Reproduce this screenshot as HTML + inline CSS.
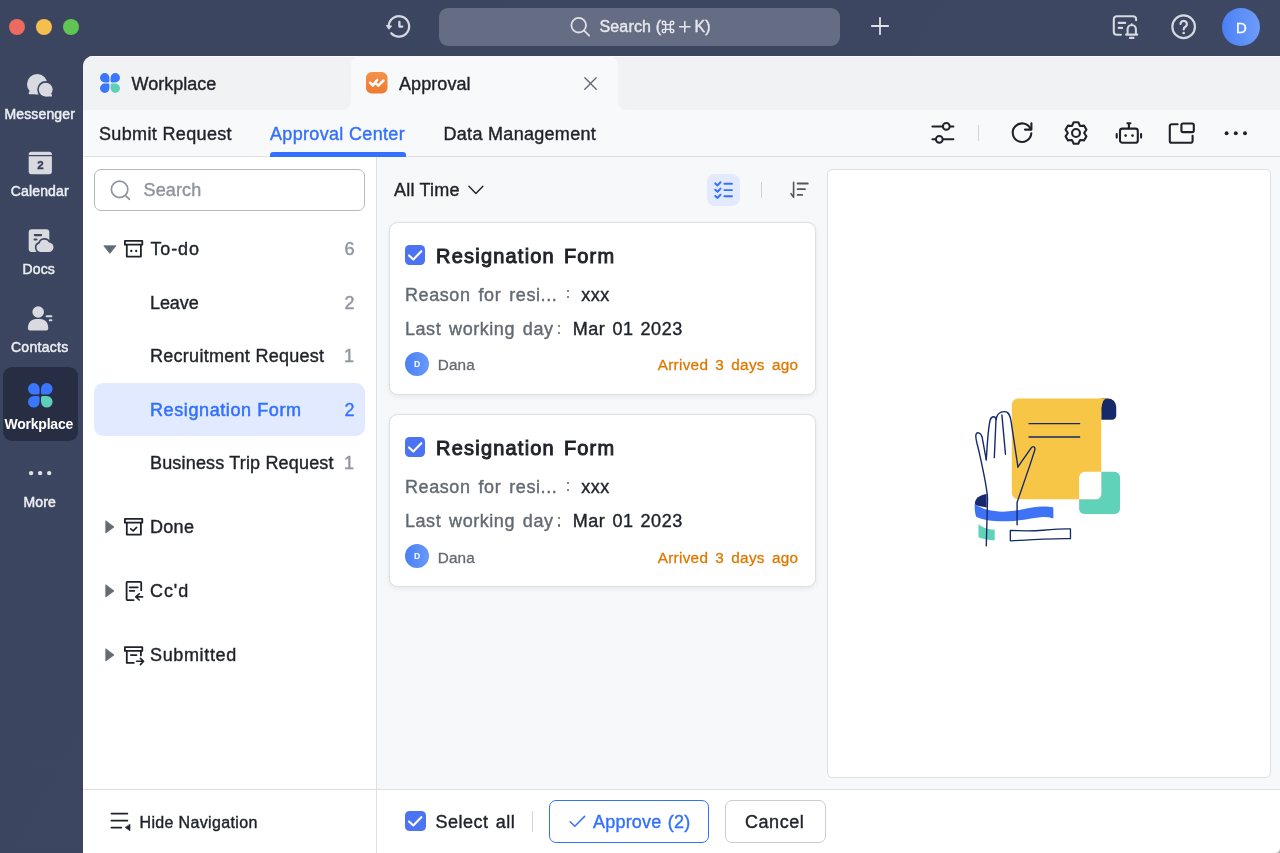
<!DOCTYPE html>
<html>
<head>
<meta charset="utf-8">
<title>Approval</title>
<style>
*{box-sizing:border-box;margin:0;padding:0}
html,body{width:1280px;height:853px;overflow:hidden}
body{font-family:"Liberation Sans",sans-serif;background:#3c4661;position:relative;color:#1f2329;-webkit-font-smoothing:antialiased}
.abs{position:absolute}
.t{position:absolute;white-space:pre;line-height:1}
.t,.nav,.row,.cnt{-webkit-text-stroke-width:0.4px}
svg{position:absolute;overflow:visible}
/* window chrome */
#bg{position:absolute;left:0;top:0;width:1280px;height:853px;background:linear-gradient(120deg,#3b4560 0%,#3c4661 50%,#3f4964 100%)}
.tl{position:absolute;top:18.5px;width:16px;height:16px;border-radius:50%}
#searchbar{position:absolute;left:439px;top:8px;width:401px;height:37.5px;border-radius:9px;background:#646d83}
.sb-label{position:absolute;left:0;width:79.5px;text-align:center;font-size:14px;line-height:14px;color:#eceef1;font-weight:normal;-webkit-text-stroke:0.5px #eceef1;white-space:pre;letter-spacing:0.15px}
#wp-sel{position:absolute;left:2.5px;top:366.5px;width:75px;height:74.5px;border-radius:9px;background:#272d42}
/* main */
#main{will-change:transform;position:absolute;left:83px;top:56px;width:1197px;height:797px;background:#f7f8fa;border-radius:10px 0 0 0;overflow:hidden}
#tabbar{position:absolute;left:0;top:0;width:1197px;height:53.5px;background:#f1f2f4;box-shadow:inset 0 1px 0 rgba(255,255,255,0.75)}
#tab-active{position:absolute;left:267.5px;top:0;width:267.5px;height:53.5px;background:#f8f9fa;border-radius:9px 9px 0 0}
#tab-active:before,#tab-active:after{content:"";position:absolute;bottom:0;width:9px;height:9px}
#tab-active:before{left:-9px;background:radial-gradient(circle at 0 0,rgba(248,249,250,0) 8.5px,#f8f9fa 9.5px)}
#tab-active:after{right:-9px;background:radial-gradient(circle at 100% 0,rgba(248,249,250,0) 8.5px,#f8f9fa 9.5px)}
#navrow{position:absolute;left:0;top:53.5px;width:1197px;height:47px;background:#f8f9fa;border-bottom:1px solid #dee0e3}
.nav{position:absolute;top:68.5px;font-size:18px;line-height:18px;white-space:pre;color:#1f2329}
#leftpanel{position:absolute;left:0;top:100.5px;width:293.5px;height:697px;background:#fff;border-right:1px solid #dee0e3}
#bottombar{position:absolute;left:293.5px;top:733px;width:904px;height:64px;background:#fff;border-top:1px solid #dee0e3}
#leftbottom{position:absolute;left:0;top:733px;width:293px;height:64px;border-top:1px solid #dee0e3;background:#fff}
#lsearch{position:absolute;left:11px;top:113px;width:271px;height:42px;border:1px solid #b4b8bf;border-radius:7px;background:#fff}
.row{position:absolute;font-size:18px;line-height:18px;white-space:pre;color:#1f2329}
.cnt{position:absolute;font-size:18px;line-height:18px;color:#8f959e;width:20px;text-align:right}
#rowsel{position:absolute;left:11px;top:326.5px;width:271px;height:53px;border-radius:9px;background:#e1eaff}
.card{position:absolute;left:305.5px;width:427.2px;height:173.2px;background:#fff;border:1px solid #dcdee2;border-radius:8.5px;box-shadow:0 2px 5px rgba(31,35,41,0.07)}
.card .t{font-size:18px}
.cb{position:absolute;width:20.2px;height:20.2px;border-radius:4.6px;background:#4c73f1}
.av{position:absolute;width:24px;height:24px;border-radius:50%;background:linear-gradient(90deg,#4a80f5,#6a99f8);color:#fff;font-size:8.6px;font-weight:bold;text-align:center;line-height:24.4px}
#rightpanel{position:absolute;left:744px;top:113px;width:443.5px;height:609px;background:#fff;border:1px solid #dee0e3;border-radius:5px}
.btn{position:absolute;top:744px;height:42.6px;border-radius:7px;background:#fff;font-size:18px}
</style>
</head>
<body>
<div id="bg"></div>

<div id="chrome" style="position:absolute;left:0;top:0;width:1280px;height:853px;will-change:transform">
<!-- traffic lights -->
<div class="tl" style="left:9.3px;background:#ec6a5f"></div>
<div class="tl" style="left:36.1px;background:#f5bf4f"></div>
<div class="tl" style="left:62.8px;background:#61c554"></div>

<!-- TOPBAR -->
<!-- history icon -->
<svg style="left:386px;top:14px" width="26" height="26" viewBox="0 0 26 26" fill="none" stroke="#d6d9df" stroke-width="2.2" stroke-linecap="round" stroke-linejoin="round">
  <path d="M2.74 12.3 A10.2 10.2 0 1 1 5.3 19.2"/>
  <path d="M0.7 11.6 L5.4 12.1 L2.9 14.8 Z" fill="#d6d9df" stroke-width="1.2"/>
  <path d="M13.4 7.9 V12.6 H16.3" stroke-width="2.3"/>
</svg>
<div id="searchbar"></div>
<svg style="left:568px;top:15px" width="24" height="24" viewBox="0 0 24 24" fill="none" stroke="#dfe1e6" stroke-width="1.8" stroke-linecap="round">
  <circle cx="10.7" cy="10.2" r="7.3"/><path d="M16.1 15.6 L21.2 20.6"/>
</svg>
<div class="t" style="left:599.5px;top:18.8px;font-size:16px;color:#e6e8ec;letter-spacing:0.15px">Search (</div>
<svg style="left:661.2px;top:19.8px" width="14" height="14" viewBox="0 0 13 13" fill="none" stroke="#e6e8ec" stroke-width="1.35">
  <path d="M4.3 4.3 H8.7 V8.7 H4.3 Z M4.3 4.3 V2.7 A1.6 1.6 0 1 0 2.7 4.3 Z M8.7 4.3 H10.3 A1.6 1.6 0 1 0 8.7 2.7 Z M8.7 8.7 V10.3 A1.6 1.6 0 1 0 10.3 8.7 Z M4.3 8.7 H2.7 A1.6 1.6 0 1 0 4.3 10.3 Z"/>
</svg>
<svg style="left:678.6px;top:21px" width="12" height="12" viewBox="0 0 12 12" fill="none" stroke="#e6e8ec" stroke-width="1.5" stroke-linecap="round"><path d="M5.8 0.6 V11 M0.6 5.8 H11"/></svg>
<div class="t" style="left:694.4px;top:18.8px;font-size:16px;color:#e6e8ec;letter-spacing:0.3px">K)</div>
<!-- plus -->
<svg style="left:871px;top:17px" width="18" height="18" viewBox="0 0 18 18" fill="none" stroke="#dfe1e6" stroke-width="1.8" stroke-linecap="round"><path d="M9 0.8 V17.2 M0.8 9 H17.2"/></svg>
<!-- notification -->
<svg style="left:1112px;top:14px" width="28" height="28" viewBox="0 0 28 28" fill="none" stroke="#d6d9df" stroke-width="2.1" stroke-linecap="round" stroke-linejoin="round">
  <path d="M8.9 20.7 H4.8 A3 3 0 0 1 1.8 17.7 V5.2 A3 3 0 0 1 4.8 2.2 H21.1 A3 3 0 0 1 24.1 5.2 V6.2"/>
  <path d="M6.7 8.9 H13.2 M6.7 13.9 H10.1"/>
  <path d="M14.1 20.6 H25.3 M15.6 20.4 V15.2 A4.15 4.15 0 0 1 23.9 15.2 V20.4 M19.75 10.8 V10.3"/>
  <path d="M18 23.9 H21.5"/>
</svg>
<!-- help -->
<svg style="left:1171px;top:14px" width="26" height="26" viewBox="0 0 26 26" fill="none" stroke="#d6d9df" stroke-width="2.2" stroke-linecap="round" stroke-linejoin="round">
  <circle cx="12.65" cy="12.75" r="11.3"/>
  <path d="M9.5 10 A3.2 3.2 0 1 1 14.4 12.8 C13.1 13.6 12.7 14.2 12.7 15.4"/>
  <circle cx="12.7" cy="19" r="1.3" fill="#d6d9df" stroke="none"/>
</svg>
<!-- avatar -->
<div class="abs" style="left:1222px;top:7.5px;width:38px;height:38px;border-radius:50%;background:linear-gradient(90deg,#4a80f5 0%,#5c8ff7 50%,#6d9bf8 100%)"></div>
<div class="t" style="left:1222.3px;top:19.6px;width:38px;text-align:center;font-size:15px;color:#fff;-webkit-text-stroke-width:0.3px">D</div>

<!-- SIDEBAR -->
<div id="wp-sel"></div>
<!-- messenger -->
<svg style="left:26px;top:73px" width="28" height="24" viewBox="0 0 28 24">
  <g fill="#d8dae0">
    <circle cx="11.2" cy="11.3" r="10.2"/>
    <path d="M2.8 21.35 V19.6 L3.7 18 H11 V21.35 Z"/>
  </g>
  <circle cx="19.7" cy="16.6" r="8.5" fill="#3c4661"/>
  <g fill="#d8dae0">
    <circle cx="19.7" cy="16.6" r="6.9"/>
    <path d="M19.7 23.5 H25.9 V21.8 L25.1 20.4 H19.7 Z"/>
  </g>
</svg>
<div class="sb-label" style="top:107px">Messenger</div>
<!-- calendar -->
<svg style="left:28px;top:151px" width="25" height="24" viewBox="0 0 25 24">
  <path d="M0.7 4 V3.6 A2.8 2.8 0 0 1 3.5 0.8 H21.1 A2.8 2.8 0 0 1 23.9 3.6 V4 Z" fill="#d8dae0"/>
  <path d="M0.7 5.3 H23.9 V20.5 A2.8 2.8 0 0 1 21.1 23.3 H3.5 A2.8 2.8 0 0 1 0.7 20.5 Z" fill="#d8dae0"/>
</svg>
<div class="t" style="left:28px;top:159.5px;width:25px;text-align:center;font-size:11.5px;font-weight:bold;color:#39425c">2</div>
<div class="sb-label" style="top:184.3px">Calendar</div>
<!-- docs -->
<svg style="left:28px;top:228px" width="27" height="25" viewBox="0 0 27 25">
  <rect x="0.7" y="1.3" width="20.6" height="22.7" rx="3" fill="#d8dae0"/>
  <path d="M6.8 7.1 H13.1 M6.6 11.5 H8.5" stroke="#3c4661" stroke-width="2.1" stroke-linecap="round"/>
  <path d="M12.6 24 A4.4 4.4 0 0 1 11.6 15.4 A5 5 0 0 1 21 14.6 A4.4 4.4 0 0 1 20.6 24 Z" fill="#d8dae0" stroke="#3c4661" stroke-width="3.2" paint-order="stroke"/>
</svg>
<div class="sb-label" style="top:261.7px;left:-1px">Docs</div>
<!-- contacts -->
<svg style="left:27px;top:305px" width="27" height="27" viewBox="0 0 27 27">
  <circle cx="11.2" cy="7" r="5.8" fill="#d8dae0"/>
  <path d="M0.9 23.2 C0.9 17.4 4.2 13.9 9.2 13.9 H13.2 C18.2 13.9 21.3 17.4 21.3 23.2 A2.2 2.2 0 0 1 19.1 25.4 H3.1 A2.2 2.2 0 0 1 0.9 23.2 Z" fill="#d8dae0"/>
  <path d="M19.7 11.2 H24.3 M22.8 15.3 H24.4" stroke="#d8dae0" stroke-width="2.1" stroke-linecap="round"/>
</svg>
<div class="sb-label" style="top:339.6px;letter-spacing:0.3px">Contacts</div>
<!-- workplace -->
<svg style="left:27.8px;top:383.2px" width="24.6" height="24.6" viewBox="0 0 24.6 24.6"><path d="M5.8 0 H5.8 A5.8 5.8 0 0 1 11.6 5.8 V9.9 A1.7 1.7 0 0 1 9.9 11.6 H5.8 A5.8 5.8 0 0 1 0 5.8 V5.8 A5.8 5.8 0 0 1 5.8 0 Z" fill="#3b77fd"/><path d="M18.8 0 H18.8 A5.8 5.8 0 0 1 24.6 5.8 V5.8 A5.8 5.8 0 0 1 18.8 11.6 H14.7 A1.7 1.7 0 0 1 13 9.9 V5.8 A5.8 5.8 0 0 1 18.8 0 Z" fill="#3b77fd"/><path d="M5.8 13 H9.9 A1.7 1.7 0 0 1 11.6 14.7 V18.8 A5.8 5.8 0 0 1 5.8 24.6 H5.8 A5.8 5.8 0 0 1 0 18.8 V18.8 A5.8 5.8 0 0 1 5.8 13 Z" fill="#3b77fd"/><path d="M14.7 13 H18.8 A5.8 5.8 0 0 1 24.6 18.8 V18.8 A5.8 5.8 0 0 1 18.8 24.6 H18.8 A5.8 5.8 0 0 1 13 18.8 V14.7 A1.7 1.7 0 0 1 14.7 13 Z" fill="#5ed0b8"/>
</svg>
<div class="sb-label" style="top:416.8px;left:-1px;color:#fff;font-weight:bold;-webkit-text-stroke:0;letter-spacing:-0.2px">Workplace</div>
<!-- more -->
<svg style="left:28px;top:469px" width="24" height="8" viewBox="0 0 24 8" fill="#e0e2e7">
  <circle cx="3.1" cy="4.1" r="2.2"/><circle cx="12.1" cy="4.1" r="2.2"/><circle cx="21.2" cy="4.1" r="2.2"/>
</svg>
<div class="sb-label" style="top:494.6px">More</div>

</div>
<!-- MAIN -->
<div id="main">
  <div id="tabbar"></div>
  <div id="tab-active"></div>
  <div id="navrow"></div>
  <div id="leftpanel"></div>
  <div id="leftbottom"></div>
  <div id="bottombar"></div>
  <div id="rightpanel"></div>
  <div class="abs" style="right:0;bottom:0;width:4px;height:4px;background:radial-gradient(circle at 0 0,rgba(160,160,160,0) 3px,#a8a8a8 4.5px);z-index:5"></div>
  <!-- tabs (coords relative to #main: x-83, y-56) -->
  <svg style="left:17px;top:17.2px" width="20" height="20" viewBox="0 0 24.6 24.6"><path d="M5.8 0 H5.8 A5.8 5.8 0 0 1 11.6 5.8 V9.9 A1.7 1.7 0 0 1 9.9 11.6 H5.8 A5.8 5.8 0 0 1 0 5.8 V5.8 A5.8 5.8 0 0 1 5.8 0 Z" fill="#3b77fd"/><path d="M18.8 0 H18.8 A5.8 5.8 0 0 1 24.6 5.8 V5.8 A5.8 5.8 0 0 1 18.8 11.6 H14.7 A1.7 1.7 0 0 1 13 9.9 V5.8 A5.8 5.8 0 0 1 18.8 0 Z" fill="#3b77fd"/><path d="M5.8 13 H9.9 A1.7 1.7 0 0 1 11.6 14.7 V18.8 A5.8 5.8 0 0 1 5.8 24.6 H5.8 A5.8 5.8 0 0 1 0 18.8 V18.8 A5.8 5.8 0 0 1 5.8 13 Z" fill="#3b77fd"/><path d="M14.7 13 H18.8 A5.8 5.8 0 0 1 24.6 18.8 V18.8 A5.8 5.8 0 0 1 18.8 24.6 H18.8 A5.8 5.8 0 0 1 13 18.8 V14.7 A1.7 1.7 0 0 1 14.7 13 Z" fill="#5ed0b8"/>
</svg>
  <div class="t" style="left:48.5px;top:18.5px;font-size:18px">Workplace</div>
  <svg style="left:283px;top:16px" width="21.5" height="21.5" viewBox="0 0 21.5 21.5">
    <defs><linearGradient id="og" x1="0" y1="0" x2="0" y2="1"><stop offset="0" stop-color="#f6914a"/><stop offset="1" stop-color="#ee7a30"/></linearGradient></defs>
    <rect x="0" y="0" width="21.5" height="21.5" rx="5.6" fill="url(#og)"/>
    <path d="M4.1 10.7 L6.9 13.5 L11.1 8.1 M10.4 11.9 L12.3 13.6 L17.5 8.5" fill="none" stroke="#fff" stroke-width="2.5" stroke-linecap="round" stroke-linejoin="round"/>
  </svg>
  <div class="t" style="left:316px;top:18.5px;font-size:18px;letter-spacing:0.08px">Approval</div>
  <svg style="left:500.5px;top:20.5px" width="13" height="13" viewBox="0 0 13 13" fill="none" stroke="#646a73" stroke-width="1.3" stroke-linecap="round"><path d="M0.8 0.8 L12.2 12.2 M12.2 0.8 L0.8 12.2"/></svg>

  <!-- nav row -->
  <div class="nav" style="left:16px;letter-spacing:0.35px">Submit Request</div>
  <div class="nav" style="left:187px;letter-spacing:0.33px;color:#3370ff">Approval Center</div>
  <div class="abs" style="left:187px;top:96px;width:135.5px;height:4.5px;background:#3370ff;border-radius:3px 3px 0 0"></div>
  <div class="nav" style="left:360.5px;letter-spacing:0.3px">Data Management</div>
  <!-- nav icons -->
  <svg style="left:847px;top:65px" width="26" height="26" viewBox="0 0 26 26" fill="none" stroke="#1f2329" stroke-width="2" stroke-linecap="round">
    <path d="M2.4 5.4 H12.6 M20 5.4 H23.4 M2.4 18.3 H5.6 M13 18.3 H23.4"/>
    <circle cx="16.3" cy="5.4" r="3.4"/><circle cx="9.3" cy="18.3" r="3.4"/>
  </svg>
  <div class="abs" style="left:895px;top:69px;width:1px;height:16px;background:#d0d3d8"></div>
  <svg style="left:927px;top:65px" width="24" height="24" viewBox="0 0 24 24" fill="none" stroke="#1f2329" stroke-width="2.1" stroke-linecap="round" stroke-linejoin="round">
    <path d="M20.4 7.6 A9.3 9.3 0 1 0 21.3 12.4"/>
    <path d="M21.4 2.2 V8.6 H15"/>
  </svg>
  <svg style="left:979.9px;top:63.8px" width="26" height="26" viewBox="0 0 26 26" fill="none" stroke="#1f2329" stroke-width="2.1" stroke-linecap="round" stroke-linejoin="round">
    <circle cx="13" cy="13" r="3.95"/>
    <path d="M15.28 2.29 L10.72 2.29 L8.93 5.94 L4.86 5.67 L2.59 9.62 L4.85 13.00 L2.59 16.38 L4.86 20.33 L8.92 20.06 L10.72 23.71 L15.28 23.71 L17.08 20.06 L21.14 20.33 L23.41 16.38 L21.15 13.00 L23.41 9.62 L21.14 5.67 L17.07 5.94 Z"/>
  </svg>
  <svg style="left:1032px;top:63.5px" width="28" height="26" viewBox="0 0 28 26" fill="none" stroke="#1f2329" stroke-width="2.1" stroke-linecap="round" stroke-linejoin="round">
    <rect x="5" y="8.6" width="17.8" height="14.2" rx="2.4"/>
    <path d="M13.9 8.2 V3.6 M12.4 3.2 H15.4"/>
    <path d="M1.7 14 V17.6 M26.1 14 V17.6"/>
    <circle cx="10.6" cy="15.6" r="1.3" fill="#1f2329" stroke="none"/><circle cx="17.5" cy="15.6" r="1.3" fill="#1f2329" stroke="none"/>
  </svg>
  <svg style="left:1085px;top:66px" width="28" height="24" viewBox="0 0 28 24" fill="none" stroke="#1f2329" stroke-width="2.1" stroke-linecap="round" stroke-linejoin="round">
    <path d="M9.6 2.2 H3.6 A1.8 1.8 0 0 0 1.8 4 V19 A1.8 1.8 0 0 0 3.6 20.8 H22.8 A1.8 1.8 0 0 0 24.6 19 V13.8"/>
    <rect x="13.4" y="1.5" width="12.4" height="8.6" rx="1.6"/>
  </svg>
  <svg style="left:1141px;top:74px" width="24" height="6" viewBox="0 0 24 6" fill="#1f2329"><circle cx="2.6" cy="3.3" r="1.95"/><circle cx="11.8" cy="3.3" r="1.95"/><circle cx="21" cy="3.3" r="1.95"/></svg>

  <!-- left panel -->
  <div id="lsearch"></div>
  <svg style="left:26px;top:123px" width="22" height="22" viewBox="0 0 22 22" fill="none" stroke="#8f959e" stroke-width="1.7" stroke-linecap="round"><circle cx="10.6" cy="10.4" r="8.2"/><path d="M16.6 16.6 L20.4 20.4"/></svg>
  <div class="row" style="left:60.5px;top:124.5px;color:#8f959e;letter-spacing:0.15px">Search</div>

  <svg style="left:20px;top:189px" width="14" height="10" viewBox="0 0 14 10"><path d="M0.8 0.8 H13 L6.9 8.4 Z" fill="#646a73" stroke="#646a73" stroke-width="0.8" stroke-linejoin="round"/></svg>
  <svg style="left:41px;top:183px" width="20" height="20" viewBox="0 0 20 20" fill="none" stroke="#1f2329" stroke-width="1.8" stroke-linejoin="round" stroke-linecap="round">
    <path d="M0.9 1.9 H18.3 V5.7 H0.9 Z"/><path d="M2.8 6 V17.6 H16.9 V6"/>
    <circle cx="7.3" cy="12" r="1.15" fill="#1f2329" stroke="none"/><circle cx="12.2" cy="12" r="1.15" fill="#1f2329" stroke="none"/>
  </svg>
  <div class="row" style="left:67.5px;top:184px;letter-spacing:0.85px">To-do</div>
  <div class="cnt" style="left:251.5px;top:184px">6</div>

  <div class="row" style="left:67px;top:237.5px;letter-spacing:-0.1px">Leave</div>
  <div class="cnt" style="left:251.5px;top:237.5px">2</div>
  <div class="row" style="left:67px;top:291px;letter-spacing:0.28px">Recruitment Request</div>
  <div class="cnt" style="left:251px;top:291px">1</div>
  <div id="rowsel"></div>
  <div class="row" style="left:67px;top:344.5px;letter-spacing:0.6px;color:#3370ff;-webkit-text-stroke:0.5px #3370ff">Resignation Form</div>
  <div class="cnt" style="left:251.5px;top:344.5px;color:#3370ff;-webkit-text-stroke:0.3px #3370ff">2</div>
  <div class="row" style="left:67px;top:398px;letter-spacing:0.17px">Business Trip Request</div>
  <div class="cnt" style="left:251px;top:398px">1</div>

  <!-- Done -->
  <svg style="left:22.4px;top:464px" width="10" height="14" viewBox="0 0 10 14"><path d="M0.8 0.8 V13 L9 6.9 Z" fill="#646a73" stroke="#646a73" stroke-width="0.8" stroke-linejoin="round"/></svg>
  <svg style="left:41px;top:461px" width="20" height="20" viewBox="0 0 20 20" fill="none" stroke="#1f2329" stroke-width="1.8" stroke-linejoin="round" stroke-linecap="round">
    <path d="M0.9 1.9 H18.3 V5.7 H0.9 Z"/><path d="M2.8 6 V17.6 H16.9 V6"/>
    <path d="M6.7 11.8 L9.2 13.9 L12.6 10.4" stroke-width="1.6"/>
  </svg>
  <div class="row" style="left:67px;top:461.5px;letter-spacing:0.3px">Done</div>
  <!-- Cc'd -->
  <svg style="left:22.4px;top:528px" width="10" height="14" viewBox="0 0 10 14"><path d="M0.8 0.8 V13 L9 6.9 Z" fill="#646a73" stroke="#646a73" stroke-width="0.8" stroke-linejoin="round"/></svg>
  <svg style="left:41px;top:524px" width="20" height="22" viewBox="0 0 20 22" fill="none" stroke="#1f2329" stroke-width="1.8" stroke-linejoin="round" stroke-linecap="round">
    <path d="M9.6 20.1 H3.4 A0.8 0.8 0 0 1 2.6 19.3 V2.7 A0.8 0.8 0 0 1 3.4 1.9 H16.4 A0.8 0.8 0 0 1 17.2 2.7 V10.2"/>
    <path d="M5.6 7.4 H13.8 M5.6 10.9 H10.4" stroke-width="1.6"/>
    <path d="M18.6 16.9 H12 M15.2 13.8 L11.8 16.9 L15.2 20" stroke-width="1.6"/>
  </svg>
  <div class="row" style="left:67px;top:525.5px;letter-spacing:0.9px">Cc'd</div>
  <!-- Submitted -->
  <svg style="left:22.4px;top:592.3px" width="10" height="14" viewBox="0 0 10 14"><path d="M0.8 0.8 V13 L9 6.9 Z" fill="#646a73" stroke="#646a73" stroke-width="0.8" stroke-linejoin="round"/></svg>
  <svg style="left:41px;top:589px" width="21" height="21" viewBox="0 0 21 21" fill="none" stroke="#1f2329" stroke-width="1.8" stroke-linejoin="round" stroke-linecap="round">
    <path d="M0.9 2.1 H18.3 V5.9 H0.9 Z"/><path d="M2.8 6.2 V17.9 H9.8 M16.9 6.2 V10.4"/>
    <path d="M6.7 10.1 H12.6" stroke-width="1.6"/>
    <path d="M12.6 16.3 H19.2 M16.4 13.4 L19.6 16.3 L16.4 19.6" stroke-width="1.6"/>
  </svg>
  <div class="row" style="left:67px;top:589.5px;letter-spacing:0.65px">Submitted</div>

  <!-- hide navigation -->
  <svg style="left:27px;top:756px" width="22" height="20" viewBox="0 0 22 20" fill="none" stroke="#1f2329" stroke-width="1.7" stroke-linecap="round">
    <path d="M1.4 1.6 H17.4 M1.4 8.6 H17.4 M1.4 15.6 H11.4"/>
    <path d="M20 12.4 V18.8 L15.4 15.6 Z" fill="#1f2329" stroke-width="0.6" stroke-linejoin="round"/>
  </svg>
  <div class="t" style="left:56.5px;top:758.5px;font-size:16px;letter-spacing:0.35px">Hide Navigation</div>
  <!-- middle header -->
  <div class="t" style="left:311px;top:125px;font-size:18px;letter-spacing:0.2px">All Time</div>
  <svg style="left:385px;top:129px" width="16" height="10" viewBox="0 0 16 10" fill="none" stroke="#1f2329" stroke-width="1.4" stroke-linecap="round" stroke-linejoin="round"><path d="M0.9 1.2 L7.9 8.4 L14.9 1.2"/></svg>
  <div class="abs" style="left:624.4px;top:118px;width:32.2px;height:32px;border-radius:8px;background:#e3eafd"></div>
  <svg style="left:631px;top:125px" width="20" height="19" viewBox="0 0 20 19" fill="none" stroke="#3370ff" stroke-width="1.9" stroke-linecap="round" stroke-linejoin="round">
    <path d="M10.4 2.8 H18 M10.4 9.1 H18 M10.4 15.3 H18"/>
    <path d="M1.3 2.4 L3.5 4.4 L6.5 1.3 M1.3 8.7 L3.5 10.7 L6.5 7.6 M1.3 14.9 L3.5 16.9 L6.5 13.8" stroke-width="2"/>
  </svg>
  <div class="abs" style="left:678.2px;top:126px;width:1px;height:16px;background:#cfd2d6"></div>
  <svg style="left:706px;top:126px" width="21" height="17" viewBox="0 0 21 17" fill="none" stroke="#51565d" stroke-width="1.8" stroke-linecap="round" stroke-linejoin="round">
    <path d="M4.6 0.3 V15 M2 11.6 L4.6 15.2" stroke-width="1.6"/>
    <path d="M8.6 1.5 H18.8 M8.6 7.2 H16 M8.6 12.9 H13.2"/>
  </svg>

  <!-- card 1 -->
  <div class="card" style="top:166px">
    <div class="cb" style="left:15.7px;top:22px"></div>
    <svg style="left:15.7px;top:22px" width="20" height="20" viewBox="0 0 20 20" fill="none" stroke="#fff" stroke-width="2.1" stroke-linecap="round" stroke-linejoin="round"><path d="M4 10.4 L8.3 14.5 L16.3 6.2"/></svg>
    <div class="t" style="left:46.6px;top:22.6px;font-size:20px;-webkit-text-stroke-width:0.95px;letter-spacing:1.2px;word-spacing:2.2px">Resignation Form</div>
    <div class="t" style="left:15.5px;top:62.6px;color:#646a73;letter-spacing:0.58px;word-spacing:2.4px">Reason for resi...</div>
    <div class="abs" style="left:177.1px;top:67px;width:2.1px;height:2.1px;border-radius:50%;background:#5a606a"></div>
    <div class="abs" style="left:177.1px;top:73.3px;width:2.1px;height:2.1px;border-radius:50%;background:#5a606a"></div>
    <div class="t" style="left:191.8px;top:62.6px;letter-spacing:0.45px">xxx</div>
    <div class="t" style="left:15.5px;top:97.2px;color:#646a73;letter-spacing:0.54px;word-spacing:2.4px">Last working day</div>
    <div class="abs" style="left:168.4px;top:102.1px;width:2.1px;height:2.1px;border-radius:50%;background:#5a606a"></div>
    <div class="abs" style="left:168.4px;top:109.2px;width:2.1px;height:2.1px;border-radius:50%;background:#5a606a"></div>
    <div class="t" style="left:183.2px;top:97.2px;letter-spacing:0.55px;word-spacing:1.5px">Mar 01 2023</div>
    <div class="av" style="left:15.7px;top:128.7px">D</div>
    <div class="t" style="left:48.2px;top:134.3px;font-size:15.3px;color:#646a73;letter-spacing:0.15px;-webkit-text-stroke-width:0.3px">Dana</div>
    <div class="t" style="right:16.3px;top:134.3px;font-size:15.3px;color:#de7802;letter-spacing:0.3px;word-spacing:2.6px;-webkit-text-stroke-width:0.3px">Arrived 3 days ago</div>
  </div>
  <!-- card 2 -->
  <div class="card" style="top:358.3px">
    <div class="cb" style="left:15.7px;top:22px"></div>
    <svg style="left:15.7px;top:22px" width="20" height="20" viewBox="0 0 20 20" fill="none" stroke="#fff" stroke-width="2.1" stroke-linecap="round" stroke-linejoin="round"><path d="M4 10.4 L8.3 14.5 L16.3 6.2"/></svg>
    <div class="t" style="left:46.6px;top:22.6px;font-size:20px;-webkit-text-stroke-width:0.95px;letter-spacing:1.2px;word-spacing:2.2px">Resignation Form</div>
    <div class="t" style="left:15.5px;top:62.6px;color:#646a73;letter-spacing:0.58px;word-spacing:2.4px">Reason for resi...</div>
    <div class="abs" style="left:177.1px;top:67px;width:2.1px;height:2.1px;border-radius:50%;background:#5a606a"></div>
    <div class="abs" style="left:177.1px;top:73.3px;width:2.1px;height:2.1px;border-radius:50%;background:#5a606a"></div>
    <div class="t" style="left:191.8px;top:62.6px;letter-spacing:0.45px">xxx</div>
    <div class="t" style="left:15.5px;top:97.2px;color:#646a73;letter-spacing:0.54px;word-spacing:2.4px">Last working day</div>
    <div class="abs" style="left:168.4px;top:102.1px;width:2.1px;height:2.1px;border-radius:50%;background:#5a606a"></div>
    <div class="abs" style="left:168.4px;top:109.2px;width:2.1px;height:2.1px;border-radius:50%;background:#5a606a"></div>
    <div class="t" style="left:183.2px;top:97.2px;letter-spacing:0.55px;word-spacing:1.5px">Mar 01 2023</div>
    <div class="av" style="left:15.7px;top:128.7px">D</div>
    <div class="t" style="left:48.2px;top:134.3px;font-size:15.3px;color:#646a73;letter-spacing:0.15px;-webkit-text-stroke-width:0.3px">Dana</div>
    <div class="t" style="right:16.3px;top:134.3px;font-size:15.3px;color:#de7802;letter-spacing:0.3px;word-spacing:2.6px;-webkit-text-stroke-width:0.3px">Arrived 3 days ago</div>
  </div>

  <!-- bottom bar -->
  <div class="cb" style="left:322.4px;top:755.2px"></div>
  <svg style="left:322.4px;top:755.2px" width="20" height="20" viewBox="0 0 20 20" fill="none" stroke="#fff" stroke-width="2.1" stroke-linecap="round" stroke-linejoin="round"><path d="M4 10.4 L8.3 14.5 L16.3 6.2"/></svg>
  <div class="t" style="left:352.5px;top:756.5px;font-size:18px;letter-spacing:0.5px;word-spacing:1.8px">Select all</div>
  <div class="abs" style="left:448.8px;top:754.7px;width:1px;height:21px;background:#d0d3d8"></div>
  <div class="btn" style="left:466px;width:159.5px;border:1.5px solid #3370ff"></div>
  <svg style="left:486px;top:759px" width="17" height="13" viewBox="0 0 17 13" fill="none" stroke="#3370ff" stroke-width="1.5" stroke-linecap="round" stroke-linejoin="round"><path d="M1.2 6.8 L5.8 11.2 L15.6 1.4"/></svg>
  <div class="t" style="left:510px;top:756.5px;font-size:18px;color:#3370ff;letter-spacing:0.2px;word-spacing:1.2px">Approve (2)</div>
  <div class="btn" style="left:641.5px;width:101px;border:1px solid #c9ccd1"></div>
  <div class="t" style="left:662px;top:756.5px;font-size:18px;letter-spacing:0.55px">Cancel</div>
  <!-- illustration: viewBox = 4.74x zoom of page region (950,380)-(1150,560) -->
  <svg style="left:867px;top:324px" width="200" height="180" viewBox="0 0 948 853">
    <!-- green block -->
    <rect x="612" y="435" width="194" height="200" rx="26" fill="#60d2b9"/>
    <!-- yellow paper -->
    <path d="M323 87 H750 V150 H717 V565 H323 A30 30 0 0 1 293 535 V117 A30 30 0 0 1 323 87 Z" fill="#f8c646"/>
    <!-- navy roll -->
    <path d="M717 87 H748 A40 40 0 0 1 788 127 V168 A20 20 0 0 1 768 188 H717 V140 C717 110 735 96 717 87 Z" fill="#15296b"/>
    <path d="M700 87 H740 C716 100 717 125 717 150 V190 H700 Z" fill="#f8c646"/>
    <rect x="688" y="536" width="29.5" height="29.5" fill="#60d2b9"/>
    <!-- white square -->
    <path d="M640 435 H717 V540 A25 25 0 0 1 692 565 H612 V463 A28 28 0 0 1 640 435 Z" fill="#fff"/>
    <!-- lines on paper -->
    <path d="M372 207 H617 M372 270 H617" stroke="#15296b" stroke-width="6.2" fill="none"/>
    <!-- ribbon back (navy) -->
    <path d="M118 590 C116 560 140 545 174 540 L174 604 C150 600 130 596 118 590 Z" fill="#15296b"/>
    <!-- ribbon blue -->
    <path d="M117 588 C150 612 200 624 250 624 C330 624 380 600 440 600 C460 600 478 602 490 604 V656 C470 650 450 648 430 650 C380 654 330 670 250 670 C200 670 150 662 124 648 C118 630 116 610 117 588 Z" fill="#3f73f6"/>
    <!-- small green -->
    <path d="M135 683 C150 700 180 708 212 710 V760 C180 758 150 752 135 745 Z" fill="#60d2b9"/>
    <!-- white outlined rect -->
    <path d="M286 713 C340 716 400 716 440 712 C490 708 540 704 571 706 V752 C540 750 490 752 440 754 C400 756 340 760 286 762 Z" fill="#fff" stroke="#15296b" stroke-width="6.2" stroke-linejoin="round"/>
    <!-- hand outline -->
    <g fill="none" stroke="#15296b" stroke-width="6.6" stroke-linecap="round" stroke-linejoin="round">
      <path d="M172 786 L178 560 C176 520 160 440 140 350 C132 310 118 275 123 258 C128 244 146 248 152 270 L172 378"/>
      <path d="M172 378 C176 320 180 230 190 192 C196 170 214 168 218 188 L210 368"/>
      <path d="M218 188 C222 160 240 150 258 150 C280 150 286 170 290 200 L322 412"/>
      <path d="M246 165 L263 352"/>
      <path d="M322 412 L385 322 C392 312 406 314 402 332 L380 400 L318 580 V686"/>
    </g>
  </svg>
</div>
</body>
</html>
